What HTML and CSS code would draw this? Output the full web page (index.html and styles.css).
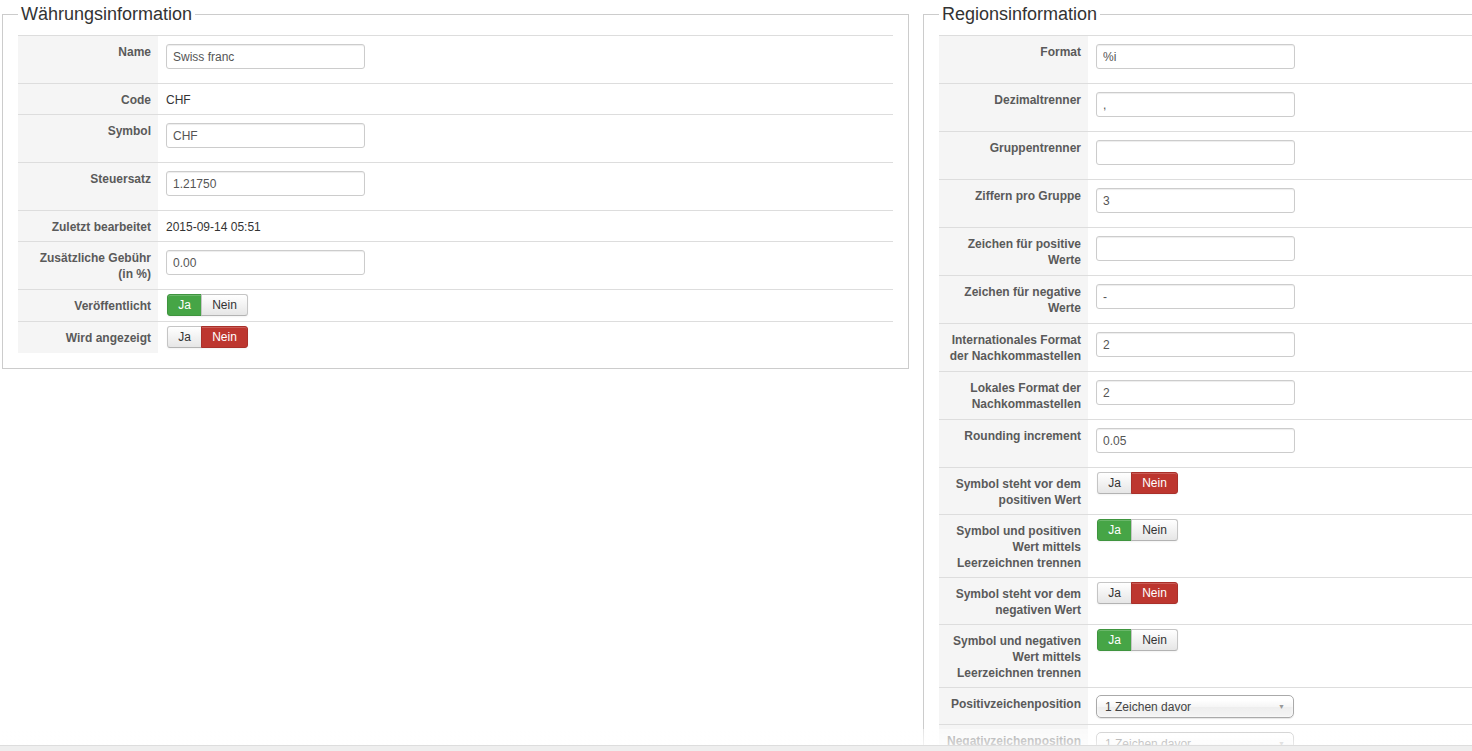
FILE: index.html
```html
<!DOCTYPE html>
<html lang="de">
<head>
    <meta charset="UTF-8">
    <meta name="viewport" content="width=device-width, initial-scale=1.0">
    <title>Währung bearbeiten</title>
    <link rel="stylesheet" href="styles.css">
</head>
<body>
    <div class="page">
        <fieldset class="panel panel-currency">
            <legend>Währungsinformation</legend>
            <table class="info-table">
                <tr>
                    <td class="key">Name</td>
                    <td><input type="text" class="field" value="Swiss franc"></td>
                </tr>
                <tr>
                    <td class="key">Code</td>
                    <td>CHF</td>
                </tr>
                <tr>
                    <td class="key">Symbol</td>
                    <td><input type="text" class="field" value="CHF"></td>
                </tr>
                <tr>
                    <td class="key">Steuersatz</td>
                    <td><input type="text" class="field" value="1.21750"></td>
                </tr>
                <tr>
                    <td class="key">Zuletzt bearbeitet</td>
                    <td>2015-09-14 05:51</td>
                </tr>
                <tr>
                    <td class="key">Zusätzliche Gebühr (in %)</td>
                    <td><input type="text" class="field" value="0.00"></td>
                </tr>
                <tr>
                    <td class="key">Veröffentlicht</td>
                    <td>
                        <div class="toggle">
                            <span class="btn btn-yes active">Ja</span><span class="btn btn-no">Nein</span>
                        </div>
                    </td>
                </tr>
                <tr>
                    <td class="key">Wird angezeigt</td>
                    <td>
                        <div class="toggle">
                            <span class="btn btn-yes">Ja</span><span class="btn btn-no active">Nein</span>
                        </div>
                    </td>
                </tr>
            </table>
        </fieldset>

        <fieldset class="panel panel-region">
            <legend>Regionsinformation</legend>
            <table class="info-table">
                <tr>
                    <td class="key">Format</td>
                    <td><input type="text" class="field" value="%i"></td>
                </tr>
                <tr>
                    <td class="key">Dezimaltrenner</td>
                    <td><input type="text" class="field" value=","></td>
                </tr>
                <tr>
                    <td class="key">Gruppentrenner</td>
                    <td><input type="text" class="field" value=""></td>
                </tr>
                <tr>
                    <td class="key">Ziffern pro Gruppe</td>
                    <td><input type="text" class="field" value="3"></td>
                </tr>
                <tr>
                    <td class="key">Zeichen für positive Werte</td>
                    <td><input type="text" class="field" value=""></td>
                </tr>
                <tr>
                    <td class="key">Zeichen für negative Werte</td>
                    <td><input type="text" class="field" value="-"></td>
                </tr>
                <tr>
                    <td class="key">Internationales Format der Nachkommastellen</td>
                    <td><input type="text" class="field" value="2"></td>
                </tr>
                <tr>
                    <td class="key">Lokales Format der Nachkommastellen</td>
                    <td><input type="text" class="field" value="2"></td>
                </tr>
                <tr>
                    <td class="key">Rounding increment</td>
                    <td><input type="text" class="field" value="0.05"></td>
                </tr>
                <tr>
                    <td class="key">Symbol steht vor dem positiven Wert</td>
                    <td>
                        <div class="toggle">
                            <span class="btn btn-yes">Ja</span><span class="btn btn-no active">Nein</span>
                        </div>
                    </td>
                </tr>
                <tr>
                    <td class="key">Symbol und positiven Wert mittels Leerzeichnen trennen</td>
                    <td>
                        <div class="toggle">
                            <span class="btn btn-yes active">Ja</span><span class="btn btn-no">Nein</span>
                        </div>
                    </td>
                </tr>
                <tr>
                    <td class="key">Symbol steht vor dem negativen Wert</td>
                    <td>
                        <div class="toggle">
                            <span class="btn btn-yes">Ja</span><span class="btn btn-no active">Nein</span>
                        </div>
                    </td>
                </tr>
                <tr>
                    <td class="key">Symbol und negativen Wert mittels Leerzeichnen trennen</td>
                    <td>
                        <div class="toggle">
                            <span class="btn btn-yes active">Ja</span><span class="btn btn-no">Nein</span>
                        </div>
                    </td>
                </tr>
                <tr>
                    <td class="key">Positivzeichenposition</td>
                    <td>
                        <div class="chosen">
                            <span>1 Zeichen davor</span>
                            <span class="chosen-arrow">&#9660;</span>
                        </div>
                    </td>
                </tr>
                <tr>
                    <td class="key">Negativzeichenposition</td>
                    <td>
                        <div class="chosen">
                            <span>1 Zeichen davor</span>
                            <span class="chosen-arrow">&#9660;</span>
                        </div>
                    </td>
                </tr>
            </table>
        </fieldset>
    </div>

    <!-- bottom fade + scrollbar strip -->
    <div class="bottom-fade"></div>
    <div class="bottom-bar"></div>
</body>
</html>
```

FILE: styles.css
```css
html, body {
    margin: 0;
    padding: 0;
    background: #fff;
    overflow: hidden;
}

body {
    font-family: "Liberation Sans", Arial, Helvetica, sans-serif;
    font-size: 12px;
    line-height: 16px;
    color: #333;
}

.page {
    display: grid;
    grid-template-columns: 907px 907px;
    column-gap: 14px;
    padding: 3px 0 0 2px;
    width: 1840px;
}

/* Fieldsets */
.panel {
    margin: 0;
    padding: 10px 15px 15px;
    border: 1px solid #ccc;
    min-width: 0;
    align-self: start;
}

.panel legend {
    padding: 0 3px;
    margin-left: 0;
    font-size: 18px;
    line-height: 22px;
    color: #333;
}

/* Tables */
.info-table {
    width: 100%;
    border-collapse: collapse;
}

.info-table td {
    border-top: 1px solid #ddd;
    padding: 8px 8px 6px;
    vertical-align: top;
    text-align: left;
}

.info-table td.key {
    width: 125px;
    padding-right: 7px;
    background: #f5f5f5;
    color: #5a5a5a;
    font-weight: bold;
    text-align: right;
}

.panel-region .info-table td.key {
    width: 129px;
}

/* Inputs */
.field {
    display: block;
    box-sizing: border-box;
    width: 199px;
    height: 25px;
    margin: 0 0 8px;
    padding: 0 6px;
    border: 1px solid #ccc;
    border-radius: 3px;
    font-family: inherit;
    font-size: 12px;
    color: #555;
    background: #fff;
    box-shadow: inset 0 1px 1px rgba(0, 0, 0, 0.075);
}

/* Yes / No buttons */
.toggle {
    display: flex;
    margin: -4px 0 -1px 1px;
}

.btn {
    display: block;
    box-sizing: border-box;
    height: 22px;
    line-height: 20px;
    text-align: center;
    border: 1px solid #c5c5c5;
    border-bottom-color: #b3b3b3;
    background: linear-gradient(#fff, #e6e6e6);
    color: #333;
    box-shadow: inset 0 1px 0 rgba(255, 255, 255, 0.2), 0 1px 2px rgba(0, 0, 0, 0.05);
}

.btn-yes {
    width: 35px;
    border-radius: 3px 0 0 3px;
}

.btn-no {
    width: 47px;
    margin-left: -1px;
    border-radius: 0 3px 3px 0;
}

.btn-yes.active {
    background: #46a546;
    border-color: #3f943f;
    color: #fff;
}

.btn-no.active {
    background: #bd362f;
    border-color: #a9302a;
    color: #fff;
}

/* Chosen select */
.chosen {
    display: flex;
    align-items: center;
    justify-content: space-between;
    box-sizing: border-box;
    width: 198px;
    height: 23px;
    margin: -1px 0 0;
    padding: 0 8px;
    border: 1px solid #aaa;
    border-radius: 5px;
    background: linear-gradient(#fff 20%, #f6f6f6 50%, #eee 52%, #f4f4f4 100%);
    box-shadow: inset 0 0 3px #fff, 0 1px 1px rgba(0, 0, 0, 0.1);
    color: #444;
}

.chosen-arrow {
    font-size: 7px;
    color: #999;
}

/* Bottom of the viewport */
.bottom-fade {
    position: fixed;
    left: 0;
    right: 0;
    bottom: 6px;
    height: 16px;
    background: linear-gradient(rgba(255, 255, 255, 0.45), rgba(255, 255, 255, 0.75));
    pointer-events: none;
}

.bottom-bar {
    position: fixed;
    left: 0;
    right: 0;
    bottom: 0;
    height: 5px;
    border-top: 1px solid #ddd;
    background: #eee;
}
```
